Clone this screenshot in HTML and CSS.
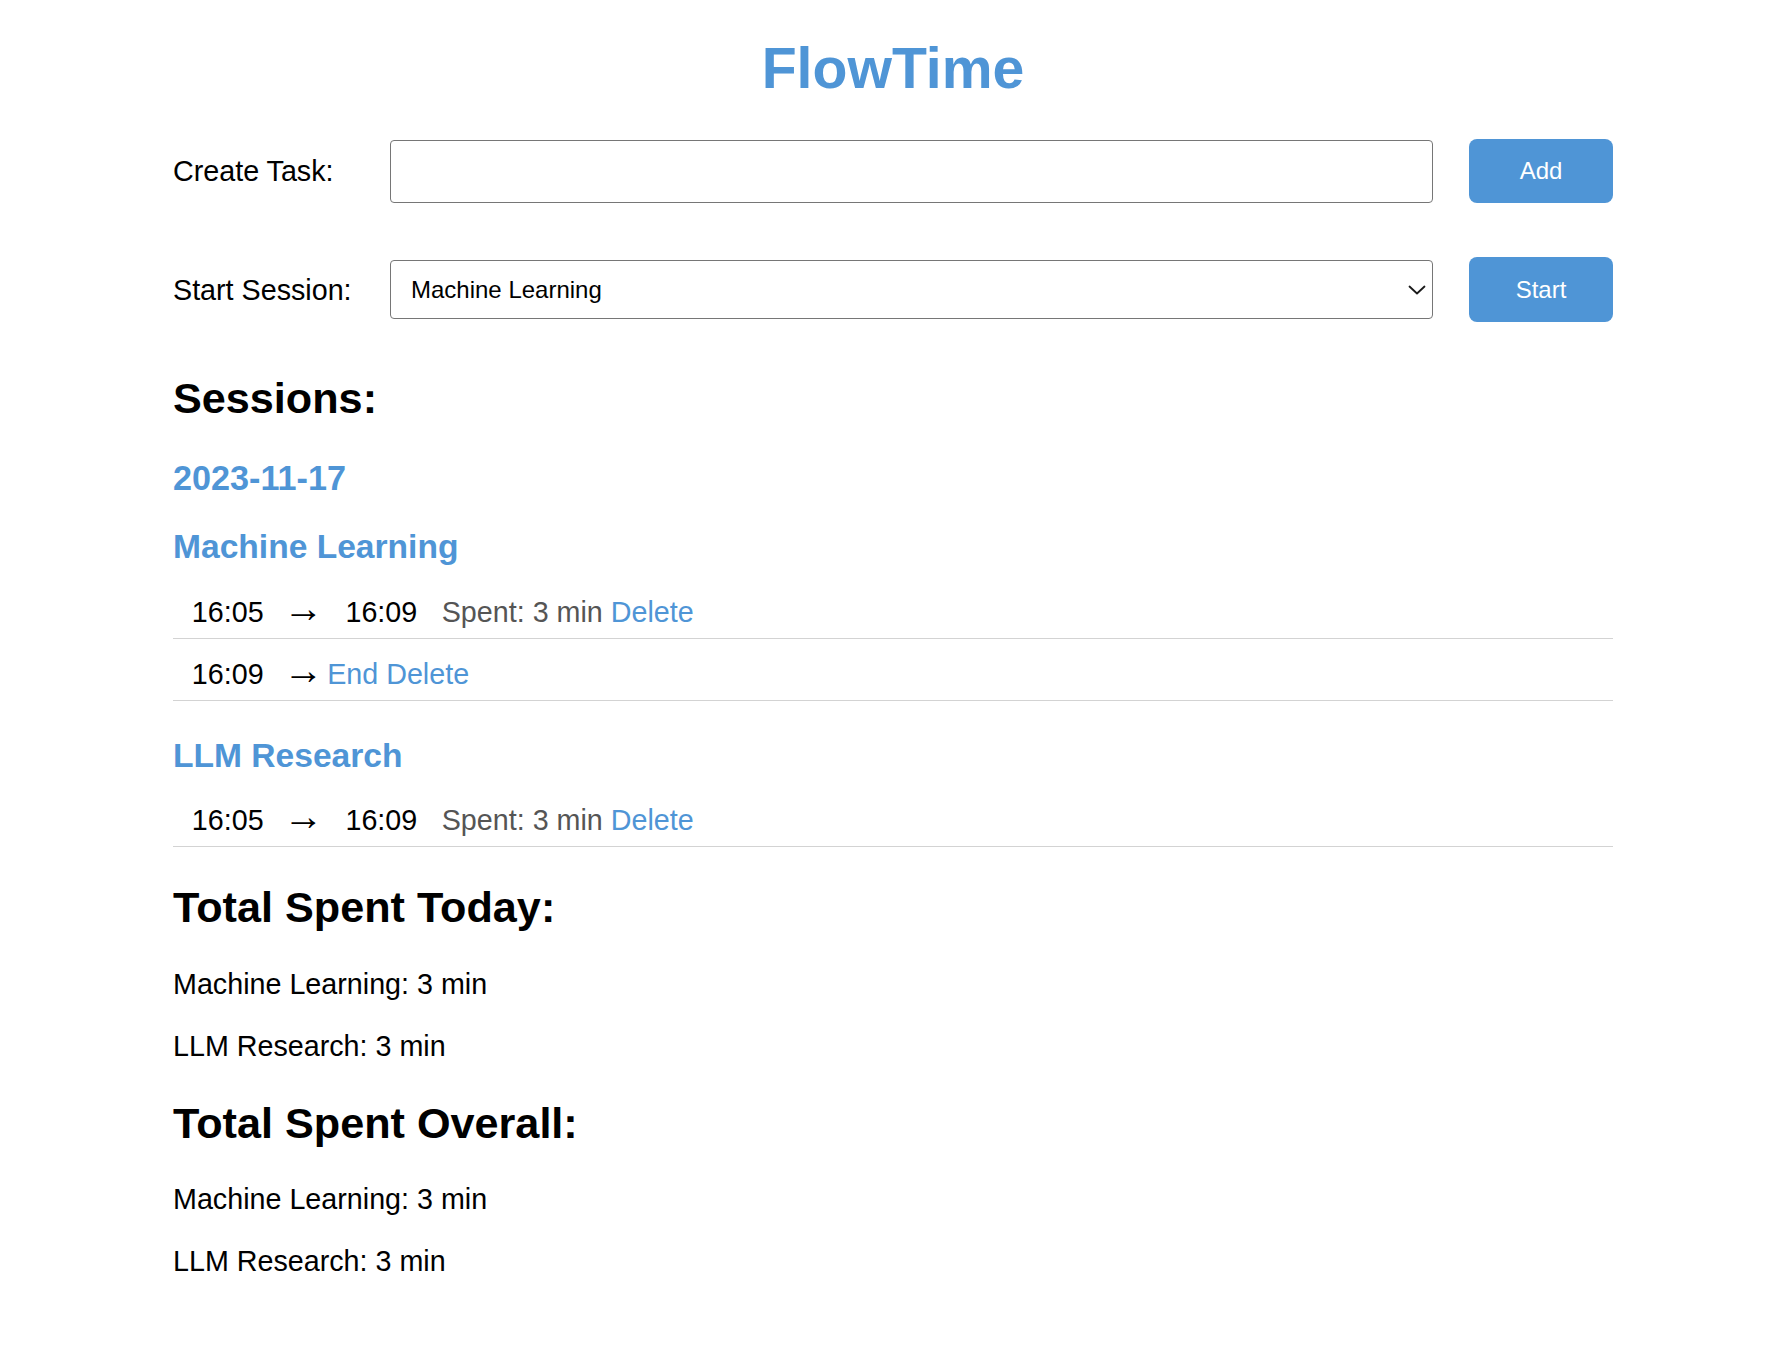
FILE: index.html
```html
<!DOCTYPE html>
<html lang="en">
<head>
<meta charset="utf-8">
<title>FlowTime</title>
<link rel="stylesheet" href="styles.css">
</head>
<body>
<div class="app">
  <h1 class="app-title">FlowTime</h1>

  <div class="controls">
    <label class="control-label" for="task">Create Task:</label>
    <input class="text-input" id="task" type="text">
    <button class="btn">Add</button>

    <label class="control-label" for="session">Start Session:</label>
    <div class="select-wrap">
      <select class="select" id="session">
        <option>Machine Learning</option>
        <option>LLM Research</option>
      </select>
      <svg class="chevron" width="18" height="10" viewBox="0 0 18 10" aria-hidden="true"><path d="M1.5 1.5 L9 8.5 L16.5 1.5" fill="none" stroke="#1a1a1a" stroke-width="1.8" stroke-linecap="round" stroke-linejoin="round"/></svg>
    </div>
    <button class="btn btn-tall">Start</button>
  </div>

  <h2 class="section-title sessions-title">Sessions:</h2>
  <h3 class="date">2023-11-17</h3>

  <div class="task-group">
    <h3 class="task-name">Machine Learning</h3>
    <ul class="entries">
      <li class="entry"><span class="time-start">16:05</span> <span class="arrow">→</span> <span class="time-end">16:09</span> <span class="spent">Spent: 3 min</span> <a class="link" href="#">Delete</a></li>
      <li class="entry"><span class="time-start">16:09</span> <span class="arrow">→</span> <a class="link" href="#">End</a> <a class="link" href="#">Delete</a></li>
    </ul>
  </div>

  <div class="task-group">
    <h3 class="task-name">LLM Research</h3>
    <ul class="entries">
      <li class="entry"><span class="time-start">16:05</span> <span class="arrow">→</span> <span class="time-end">16:09</span> <span class="spent">Spent: 3 min</span> <a class="link" href="#">Delete</a></li>
    </ul>
  </div>

  <section class="totals totals-today">
    <h2 class="section-title">Total Spent Today:</h2>
    <p class="total-item">Machine Learning: 3 min</p>
    <p class="total-item">LLM Research: 3 min</p>
  </section>

  <section class="totals totals-overall">
    <h2 class="section-title">Total Spent Overall:</h2>
    <p class="total-item">Machine Learning: 3 min</p>
    <p class="total-item">LLM Research: 3 min</p>
  </section>
</div>
</body>
</html>
```

FILE: styles.css
```css
html, body {
  margin: 0;
  padding: 0;
  background: #ffffff;
}

body {
  font-family: "Liberation Sans", Arial, Helvetica, sans-serif;
  color: #000;
  font-size: 28.7px;
  line-height: 32px;
}

.app {
  width: 1440px;
  margin: 0 auto;
  padding-bottom: 60px;
}

.app-title {
  margin: 36px 0 0;
  font-size: 57.2px;
  line-height: 64px;
  font-weight: bold;
  text-align: center;
  color: #4f95d6;
}

.controls {
  margin-top: 39px;
  display: grid;
  grid-template-columns: 181px 1fr 144px;
  column-gap: 36px;
  row-gap: 54px;
  align-items: center;
}

.control-label {
  font-size: 28.7px;
  line-height: 32px;
}

.text-input {
  box-sizing: border-box;
  height: 63px;
  width: 100%;
  margin: 0;
  border: 1px solid #767676;
  border-radius: 4px;
  font: 24px "Liberation Sans", Arial, sans-serif;
  padding: 0 20px;
  background: #fff;
}

.select-wrap {
  position: relative;
  height: 59px;
}

.select {
  box-sizing: border-box;
  -webkit-appearance: none;
  appearance: none;
  width: 100%;
  height: 59px;
  margin: 0;
  border: 1px solid #767676;
  border-radius: 4px;
  background: #fff;
  color: #000;
  font: 24px "Liberation Sans", Arial, sans-serif;
  padding: 0 40px 0 20px;
}

.chevron {
  position: absolute;
  right: 7px;
  top: 25px;
  pointer-events: none;
}

.btn {
  box-sizing: border-box;
  height: 64px;
  width: 144px;
  margin: 0;
  border: none;
  border-radius: 8px;
  background: #4f95d6;
  color: #fff;
  font: 24px "Liberation Sans", Arial, sans-serif;
  cursor: pointer;
}

.btn-tall {
  height: 65px;
}

.section-title {
  margin: 0;
  font-size: 43.2px;
  line-height: 48px;
  font-weight: bold;
}

.sessions-title {
  margin-top: 52px;
}

.date {
  margin: 37px 0 0;
  font-size: 34.2px;
  line-height: 38px;
  font-weight: bold;
  color: #4f95d6;
}

.task-group {
  margin-top: 31px;
}

.task-group + .task-group {
  margin-top: 36px;
}

.task-name {
  margin: 0;
  font-size: 33.6px;
  line-height: 38px;
  font-weight: bold;
  color: #4f95d6;
}

.entries {
  list-style: none;
  margin: 19.5px 0 0;
  padding: 0;
  display: flex;
  flex-direction: column;
  gap: 9px;
}

.entry {
  padding: 10px 0;
  font-size: 28.7px;
  line-height: 32px;
  border-bottom: 1px solid #d3d3d3;
  white-space: nowrap;
}

.time-start {
  margin: 0 11.6px 0 18.8px;
}

.time-end {
  margin: 0 16.5px 0 18.3px;
}

.arrow {
  font-size: 40px;
  line-height: 0;
  margin-right: -4px;
}

.spent {
  color: #555;
}

.link {
  color: #4f95d6;
  text-decoration: none;
}

.totals-today {
  margin-top: 36px;
}

.totals-overall {
  margin-top: 37px;
}

.total-item {
  margin: 30px 0 0;
  font-size: 28.7px;
  line-height: 32px;
}

.section-title + .total-item {
  margin-top: 36.5px;
}
```
